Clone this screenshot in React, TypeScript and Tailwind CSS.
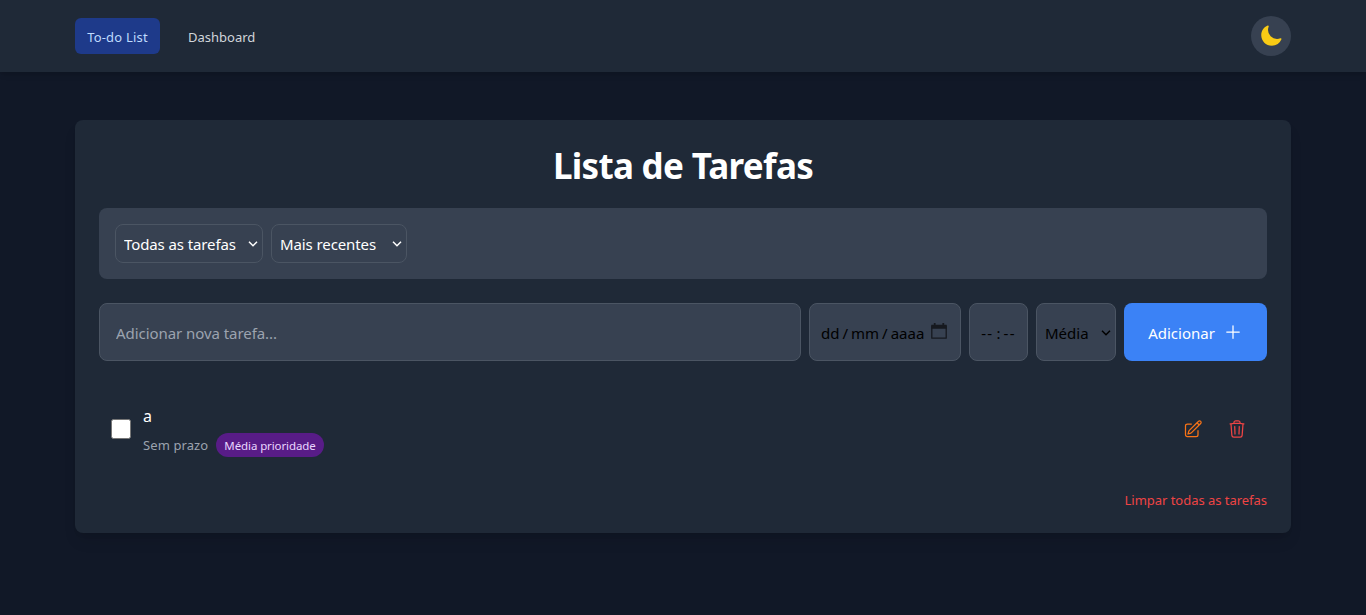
import React from "react";
import { HiMoon, HiOutlinePencilSquare, HiOutlinePlus, HiOutlineTrash } from "react-icons/hi2";

function Header() {
  return (
    <header className="bg-[#1f2937] shadow-md">
      <div className="mx-auto flex h-[72px] w-[1216px] items-center justify-between">
        <nav className="flex items-center gap-4 text-[13px]">
          <a href="#" className="flex h-9 w-[85px] items-center justify-center whitespace-nowrap rounded-md bg-[#1e3a8a] pt-[3px] tracking-[0.2px] text-[#bfdbfe]">
            To-do List
          </a>
          <a href="#" className="flex h-9 items-center rounded-md px-3 pt-[3px] text-[#d1d5db]">
            Dashboard
          </a>
        </nav>
        <button aria-label="Tema" className="flex size-10 items-center justify-center rounded-full bg-[#374151]">
          <HiMoon className="size-6 text-[#facc15]" />
        </button>
      </div>
    </header>
  );
}

function Select({ label, box, chevron }: { label: string; box: string; chevron: string }) {
  return (
    <div className={`relative ${box}`}>
      <select className="h-full w-full appearance-none rounded-lg border border-[#4b5563] bg-[#374151] px-2 pt-0.5 text-inherit">
        <option>{label}</option>
      </select>
      <svg viewBox="0 0 10 6" className={`pointer-events-none absolute right-[5px] h-1.5 w-2.5 ${chevron}`} fill="none">
        <path d="M1 0.8 L5 4.8 L9 0.8" stroke="currentColor" strokeWidth="1.5" />
      </svg>
    </div>
  );
}

function Filters() {
  return (
    <div className="mb-6 flex gap-2 rounded-lg bg-[#374151] p-4 tracking-[-0.1px] text-white">
      <Select label="Todas as tarefas" box="h-[39px] w-[148px]" chevron="top-[17px]" />
      <Select label="Mais recentes" box="h-[39px] w-[136px]" chevron="top-[17px]" />
    </div>
  );
}

function CalendarIcon() {
  return (
    <svg viewBox="0 0 16 16" className="h-4 w-4" fill="none">
      <path d="M0.8 3h14.4v12.2H0.8z" stroke="#16191f" strokeWidth="1.3" strokeLinejoin="round" />
      <path d="M0.4 1.8h15.2v4H0.4zM2.8 0h1.8v2.4H2.8zM11.4 0h1.8v2.4h-1.8z" fill="#16191f" />
    </svg>
  );
}

function TaskForm() {
  return (
    <form className="mb-6 flex h-[58px] gap-2">
      <input
        type="text"
        placeholder="Adicionar nova tarefa..."
        className="w-[702px] rounded-lg border border-[#4b5563] bg-[#374151] px-4 pt-0.5 tracking-[-0.06px] text-white placeholder:text-[#9ca3af]"
      />
      <div className="flex w-[152px] items-center rounded-lg border border-[#4b5563] bg-[#374151] pl-[11px] text-black">
        <span className="w-[110px] whitespace-nowrap pt-0.5">
          <span>dd</span>
          <span className="px-[3px]">/</span>
          <span>mm</span>
          <span className="px-[3px]">/</span>
          <span>aaaa</span>
        </span>
        <span className="pb-0.5">
          <CalendarIcon />
        </span>
      </div>
      <div className="flex w-[59px] items-center justify-center whitespace-nowrap rounded-lg border border-[#4b5563] bg-[#374151] pt-0.5 text-black">
        <span className="tracking-[1.3px]">--</span>
        <span className="px-[3px]">:</span>
        <span className="tracking-[1.3px]">--</span>
      </div>
      <div className="text-black">
        <Select label="Média" box="h-[58px] w-20" chevron="top-[27px]" />
      </div>
      <button type="button" className="flex w-[143px] items-center justify-center gap-2 rounded-lg bg-[#3b82f6] text-white">
        <span className="pt-0.5">Adicionar</span>
        <HiOutlinePlus className="size-5" />
      </button>
    </form>
  );
}

function TaskItem() {
  return (
    <li className="flex h-[88px] items-center px-3">
      <span className="size-5 rounded-[2.5px] border border-[#767676] bg-white" />
      <div className="ml-3 flex-1 pt-[3px]">
        <p className="h-6 text-base leading-6 text-white">a</p>
        <div className="mt-[5px] flex items-center gap-2">
          <span className="w-[65px] whitespace-nowrap pt-0.5 text-[13px] tracking-[0.1px] text-[#9ca3af]">Sem prazo</span>
          <span className="flex h-6 w-[108px] items-center justify-center whitespace-nowrap rounded-full bg-[#581c87] pt-0.5 text-[11.5px] tracking-[-0.1px] text-[#e9d5ff]">
            Média prioridade
          </span>
        </div>
      </div>
      <div className="flex gap-2">
        <button aria-label="Editar" className="p-2 text-[#f97316]">
          <HiOutlinePencilSquare className="size-5" />
        </button>
        <button aria-label="Excluir" className="p-2 text-[#ef4444]">
          <HiOutlineTrash className="size-5" />
        </button>
      </div>
    </li>
  );
}

export default function App() {
  return (
    <div className="min-h-screen bg-[#111827] font-['Noto_Sans',sans-serif] text-[15px]">
      <Header />
      <main className="mx-auto w-[1216px] pt-12">
        <section className="h-[413px] rounded-lg bg-[#1f2937] p-6 shadow-lg">
          <h1 className="mb-6 h-10 whitespace-nowrap text-center text-[35px] leading-[44px] font-bold tracking-[-0.7px] text-white">
            Lista de Tarefas
          </h1>
          <Filters />
          <TaskForm />
          <ul>
            <TaskItem />
          </ul>
          <div className="mt-[15px] flex justify-end">
            <button className="whitespace-nowrap text-[13px] leading-6 tracking-[-0.03px] text-[#ef4444]">Limpar todas as tarefas</button>
          </div>
        </section>
      </main>
    </div>
  );
}
